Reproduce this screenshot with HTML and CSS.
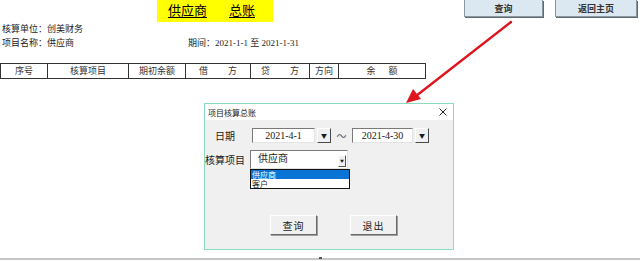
FILE: index.html
```html
<!DOCTYPE html>
<html lang="zh-CN">
<head>
    <meta charset="UTF-8">
    <title>供应商 总账</title>
    <link rel="stylesheet" href="styles.css">
</head>
<body>
    <div class="sheet">
        <div class="top-bar">
            <h1 class="ledger-title"><span class="title-text">供应商<span class="title-gap"></span>总账</span></h1>
            <div class="sheet-btns">
                <button class="sheet-btn query">查询</button>
                <button class="sheet-btn home">返回主页</button>
            </div>
        </div>

        <div class="info-row">
            <span class="info-label">核算单位：</span>创美财务
        </div>
        <div class="info-row">
            <span class="info-left"><span class="info-label">项目名称：</span>供应商</span><span class="info-label">期间：</span>2021-1-1 <span class="cjk">至</span> 2021-1-31
        </div>

        <table class="ledger">
            <colgroup>
                <col style="width: 47px">
                <col style="width: 81px">
                <col style="width: 57px">
                <col style="width: 65px">
                <col style="width: 59px">
                <col style="width: 29px">
                <col style="width: 87px">
            </colgroup>
            <tr>
                <th>序号</th>
                <th>核算项目</th>
                <th>期初余额</th>
                <th>借<span class="gap-l"></span>方</th>
                <th>贷<span class="gap-l"></span>方</th>
                <th>方向</th>
                <th>余<span class="gap-s"></span>额</th>
            </tr>
        </table>

        <div class="status-line"><span class="status-tick"></span></div>
    </div>

    <!-- 红色指示箭头 -->
    <svg class="arrow" width="640" height="261" viewBox="0 0 640 261">
        <line x1="511" y1="22" x2="416" y2="96" stroke="#e0141c" stroke-width="2.4" stroke-linecap="round"/>
        <polygon points="406,103 421,99 413,89" fill="#e0141c"/>
    </svg>

    <!-- 项目核算总账 弹窗 -->
    <div class="dialog">
        <div class="dialog-title">
            <span>项目核算总账</span>
            <svg class="dialog-close" width="8" height="8" viewBox="0 0 8 8">
                <path d="M0.5 0.5 L7.5 7.5 M7.5 0.5 L0.5 7.5" stroke="#222" stroke-width="1"/>
            </svg>
        </div>
        <div class="dialog-body">
            <div class="form-row date-row">
                <span class="form-label">日期</span>
                <span class="date-field first">2021-4-1</span>
                <span class="drop-btn">▼</span>
                <span class="tilde">～</span>
                <span class="date-field">2021-4-30</span>
                <span class="drop-btn">▼</span>
            </div>
            <div class="form-row combo-row">
                <span class="form-label">核算项目</span>
                <div class="combo-wrap">
                    <div class="combo">
                        <span class="combo-text">供应商</span>
                        <span class="combo-arrow">▼</span>
                    </div>
                    <ul class="combo-list">
                        <li class="selected">供应商</li>
                        <li>客户</li>
                    </ul>
                </div>
            </div>
            <div class="dialog-btns">
                <button class="win-btn">查询</button>
                <button class="win-btn">退出</button>
            </div>
        </div>
    </div>
</body>
</html>
```

FILE: styles.css
```css
/* 基础样式 */
* {
    margin: 0;
    padding: 0;
    box-sizing: border-box;
}

:root {
    --cjk: "Noto Sans CJK SC", sans-serif;
    --num: "Liberation Serif", "Noto Sans CJK SC", serif;
    --text: #1a1a1a;
    --face: #f0f0f0;
}

body {
    width: 640px;
    height: 261px;
    background: #fff;
    color: var(--text);
    font-family: var(--num);
    overflow: hidden;
    position: relative;
}

.cjk {
    font-family: var(--cjk);
}

/* 表格区域 */
.sheet {
    height: 261px;
    display: flex;
    flex-direction: column;
}

.top-bar {
    height: 22px;
    display: flex;
    align-items: flex-start;
}

.ledger-title {
    margin-left: 157px;
    width: 116px;
    height: 22px;
    background: #ffff00;
    font-family: var(--cjk);
    font-weight: normal;
    font-size: 13px;
    line-height: 19px;
    padding-left: 11px;
    color: #000;
}

.title-text {
    text-decoration: underline;
    text-underline-offset: 2px;
}

.title-gap {
    display: inline-block;
    width: 22px;
}

.sheet-btns {
    margin-left: auto;
    margin-right: 3px;
    display: flex;
    gap: 12px;
}

.sheet-btn {
    height: 17px;
    background: #dbe8f1;
    border: 1px solid #8a979f;
    border-top: none;
    box-shadow: 1px 1px 0 #5f6a70;
    font-family: var(--cjk);
    font-size: 9px;
    font-weight: bold;
    color: #333;
}

.sheet-btn.query { width: 79px; }
.sheet-btn.home { width: 82px; }

.info-row {
    height: 14px;
    line-height: 14px;
    font-size: 9px;
    padding-left: 2px;
    white-space: nowrap;
}

.info-label {
    font-family: var(--cjk);
}

.info-left {
    display: inline-block;
    width: 186px;
    font-family: var(--cjk);
}

.ledger {
    margin-top: 13px;
    width: 425px;
    border-collapse: collapse;
    table-layout: fixed;
}

.ledger th {
    height: 15px;
    border: 1px solid #333;
    font-family: var(--cjk);
    font-weight: normal;
    font-size: 9px;
    line-height: 12px;
    color: #333;
    text-align: center;
    white-space: nowrap;
}

.gap-l {
    display: inline-block;
    width: 20px;
}

.gap-s {
    display: inline-block;
    width: 13px;
}

.status-line {
    margin-top: auto;
    margin-bottom: 1px;
    height: 2px;
    background: #c6c6c6;
    display: flex;
    justify-content: center;
}

.status-tick {
    width: 3px;
    height: 2px;
    margin-top: -1px;
    background: #555;
}

/* 箭头 */
.arrow {
    position: absolute;
    left: 0;
    top: 0;
    pointer-events: none;
}

/* 弹窗 */
.dialog {
    position: absolute;
    left: 204px;
    top: 103px;
    width: 250px;
    height: 147px;
    border: 1px solid #8adcc1;
    background: var(--face);
    font-family: var(--cjk);
}

.dialog-title {
    height: 16px;
    background: #fff;
    display: flex;
    align-items: center;
    justify-content: space-between;
    padding: 0 6px 0 3px;
    font-size: 8px;
}

.dialog-close {
    display: block;
}

.dialog-body {
    padding-top: 8px;
}

.form-row {
    display: flex;
    align-items: center;
}

.form-label {
    width: 40px;
    text-align: center;
    font-size: 10px;
}

.date-row {
    height: 15px;
}

.date-field {
    width: 61px;
    height: 15px;
    background: #fff;
    border: 1px solid;
    border-color: #7a7a7a #e3e3e3 #e3e3e3 #7a7a7a;
    font-family: var(--num);
    font-size: 10px;
    line-height: 13px;
    text-align: center;
}

.date-field.first {
    width: 63px;
    margin-left: 7px;
}

.drop-btn {
    width: 14px;
    height: 15px;
    margin-left: 2px;
    background: var(--face);
    border: 1px solid;
    border-color: #fff #4a4a4a #4a4a4a #fff;
    font-size: 6px;
    line-height: 13px;
    text-align: center;
}

.tilde {
    width: 21px;
    text-align: center;
    font-size: 10px;
    color: #555;
}

.combo-row {
    margin-top: 7px;
    height: 19px;
}

.combo-wrap {
    margin-left: 5px;
    position: relative;
}

.combo {
    width: 98px;
    height: 19px;
    background: #fff;
    border: 1px solid;
    border-color: #7a7a7a #e3e3e3 #e3e3e3 #7a7a7a;
    display: flex;
    justify-content: space-between;
    align-items: flex-start;
}

.combo-text {
    padding: 1px 0 0 7px;
    font-size: 10px;
    line-height: 12px;
}

.combo-arrow {
    width: 8px;
    height: 12px;
    margin: 4px 1px 0 0;
    border: 1px solid;
    border-color: #fff #555 #555 #fff;
    background: var(--face);
    font-size: 4px;
    line-height: 10px;
    text-align: center;
}

.combo-list {
    position: absolute;
    left: 0;
    top: 19px;
    width: 100px;
    list-style: none;
    background: #fff;
    border: 1px solid #111;
    font-size: 8px;
    line-height: 9px;
}

.combo-list li {
    height: 9px;
    padding-left: 1px;
}

.combo-list li.selected {
    background: #0a74d6;
    color: #fff;
}

.dialog-btns {
    margin-top: 46px;
    padding-left: 65px;
    display: flex;
    gap: 33px;
}

.win-btn {
    width: 47px;
    height: 20px;
    background: var(--face);
    border: 1px solid;
    border-color: #fff #6a6a6a #6a6a6a #fff;
    box-shadow: 1px 1px 0 #a0a0a0;
    font-family: var(--cjk);
    font-size: 10px;
    letter-spacing: 1px;
    color: #222;
}
```
